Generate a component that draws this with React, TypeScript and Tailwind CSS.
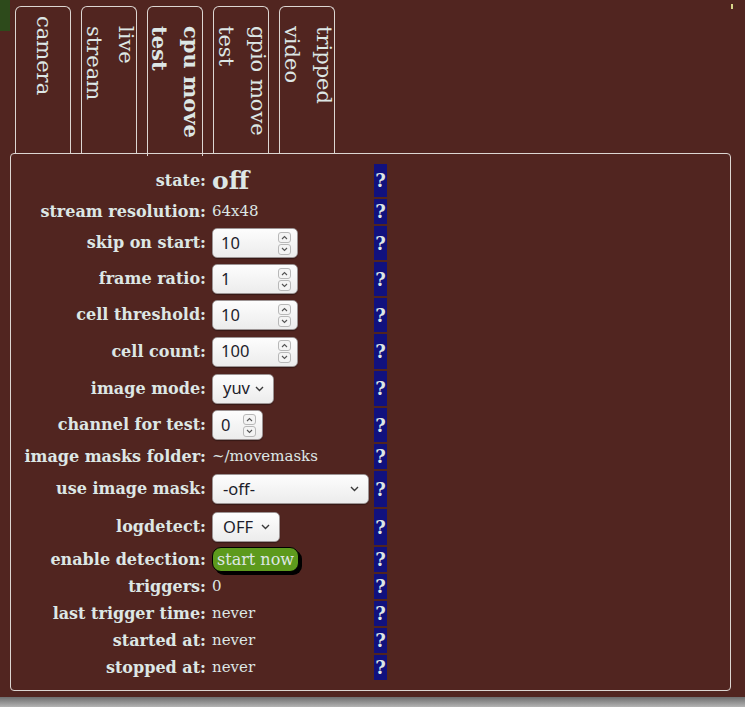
import React from "react";

const Chevron = () => (
  <svg width="9" height="6" viewBox="0 0 9 6" className="shrink-0">
    <path d="M1 1 L4.5 4.5 L8 1" fill="none" stroke="#3a3a3a" strokeWidth="1.4" />
  </svg>
);

const SpinBtn = ({ up }: { up?: boolean }) => (
  <div className="w-[13px] h-[11px] rounded-[3px] border border-[#b8b8b8] bg-[#f4f4f4] flex items-center justify-center">
    <svg width="7" height="5" viewBox="0 0 7 5">
      <path
        d={up ? "M1 4 L3.5 1.5 L6 4" : "M1 1 L3.5 3.5 L6 1"}
        fill="none"
        stroke="#555"
        strokeWidth="1.1"
      />
    </svg>
  </div>
);

function NumberBox({ value, w }: { value: string; w: string }) {
  return (
    <div
      className={`${w} h-[30px] flex items-center justify-between pl-[8px] pr-[6px] rounded-[5px] border border-[#9c9494] bg-gradient-to-b from-[#fdfdfd] to-[#ececec] shadow-[0_1px_1px_rgba(0,0,0,0.35)] text-[16.5px] text-[#1d1d2b] font-['Noto_Sans',sans-serif]`}
    >
      <span>{value}</span>
      <div className="flex flex-col gap-[1px]">
        <SpinBtn up />
        <SpinBtn />
      </div>
    </div>
  );
}

function SelectBox({ value, w }: { value: string; w: string }) {
  return (
    <div
      className={`${w} h-[30px] flex items-center justify-between pl-[10px] pr-[9px] rounded-[5px] border border-[#9c9494] bg-gradient-to-b from-[#fdfdfd] to-[#ececec] shadow-[0_1px_1px_rgba(0,0,0,0.35)] text-[16.5px] text-[#1d1d2b] font-['Noto_Sans',sans-serif]`}
    >
      <span>{value}</span>
      <Chevron />
    </div>
  );
}

const rows: { label: string; h: string; value: React.ReactNode }[] = [
  { label: "state:", h: "h-[33px]", value: <span className="text-[25px] font-bold leading-none">off</span> },
  { label: "stream resolution:", h: "h-[25px]", value: "64x48" },
  { label: "skip on start:", h: "h-[34px]", value: <NumberBox value="10" w="w-[86px]" /> },
  { label: "frame ratio:", h: "h-[34px]", value: <NumberBox value="1" w="w-[86px]" /> },
  { label: "cell threshold:", h: "h-[34px]", value: <NumberBox value="10" w="w-[86px]" /> },
  { label: "cell count:", h: "h-[35px]", value: <NumberBox value="100" w="w-[86px]" /> },
  { label: "image mode:", h: "h-[35px]", value: <SelectBox value="yuv" w="w-[62px]" /> },
  { label: "channel for test:", h: "h-[34px]", value: <NumberBox value="0" w="w-[51px]" /> },
  { label: "image masks folder:", h: "h-[25px]", value: "~/movemasks" },
  { label: "use image mask:", h: "h-[36px]", value: <SelectBox value="-off-" w="w-[157px]" /> },
  { label: "logdetect:", h: "h-[36px]", value: <SelectBox value="OFF" w="w-[68px]" /> },
  {
    label: "enable detection:",
    h: "h-[25px]",
    value: (
      <span className="h-[25px] px-[4px] flex items-center rounded-[9px] border border-black bg-[#5d9a1d] shadow-[3px_3px_0_#000] text-[16px]">
        start now
      </span>
    ),
  },
  { label: "triggers:", h: "h-[25px]", value: "0" },
  { label: "last trigger time:", h: "h-[25px]", value: "never" },
  { label: "started at:", h: "h-[25px]", value: "never" },
  { label: "stopped at:", h: "h-[25px]", value: "never" },
];

const tabs = [
  { lines: ["camera"], pt: "pt-[9px]" },
  { lines: ["live", "stream"], pt: "pt-[19px]" },
  { lines: ["cpu move", "test"], pt: "pt-[19px]", active: true },
  { lines: ["gpio move", "test"], pt: "pt-[19px]" },
  { lines: ["tripped", "video"], pt: "pt-[19px]" },
];

export default function App() {
  return (
    <div className="relative w-[745px] h-[707px] flex flex-col font-['DejaVu_Serif',serif] text-[#dde7e5]">
      <div className="h-[697px] bg-[#512520] pt-[6px]">
        {/* tabs */}
        <div className="flex items-start gap-[10px] pl-[15px] h-[147px]">
          {tabs.map((t, i) => (
            <div
              key={i}
              className={`relative z-10 w-[56px] rounded-t-[6px] border border-b-0 border-[#dcd6d2] flex justify-center ${t.pt} ${
                t.active ? "h-[150px] font-bold" : "h-[147px]"
              }`}
            >
              <div className="[writing-mode:vertical-rl] text-[21px] whitespace-nowrap">
                {t.lines.map((l, j) => (
                  <React.Fragment key={j}>
                    {j > 0 && <br />}
                    {l}
                  </React.Fragment>
                ))}
              </div>
            </div>
          ))}
        </div>

        {/* panel */}
        <div className="ml-[10px] w-[721px] h-[538px] rounded-[4px] border border-[#dcd6d2] pt-[10px] pl-[11px]">
          <div className="grid grid-cols-[185px_163px_13px] gap-[2px] text-[15px]">
            {rows.map((r) => (
              <React.Fragment key={r.label}>
                <div className={`${r.h} flex items-center justify-end pr-[1px] font-bold text-[16px]`}>{r.label}</div>
                <div className={`${r.h} flex items-center pl-[3px]`}>{r.value}</div>
                <div className={`${r.h} flex items-center justify-center bg-[#11117e] font-bold text-[18px]`}>?</div>
              </React.Fragment>
            ))}
          </div>
        </div>
      </div>
      <div className="h-[10px] bg-gradient-to-b from-[#6f6f6f] to-[#b4b4b4]" />

      {/* corner marks */}
      <div className="absolute top-0 left-0 w-[10px] h-[31px] bg-[#2d4a1b]" />
      <div className="absolute top-[4px] left-[731px] w-[2px] h-[5px] bg-[#d8d48a]" />
    </div>
  );
}
